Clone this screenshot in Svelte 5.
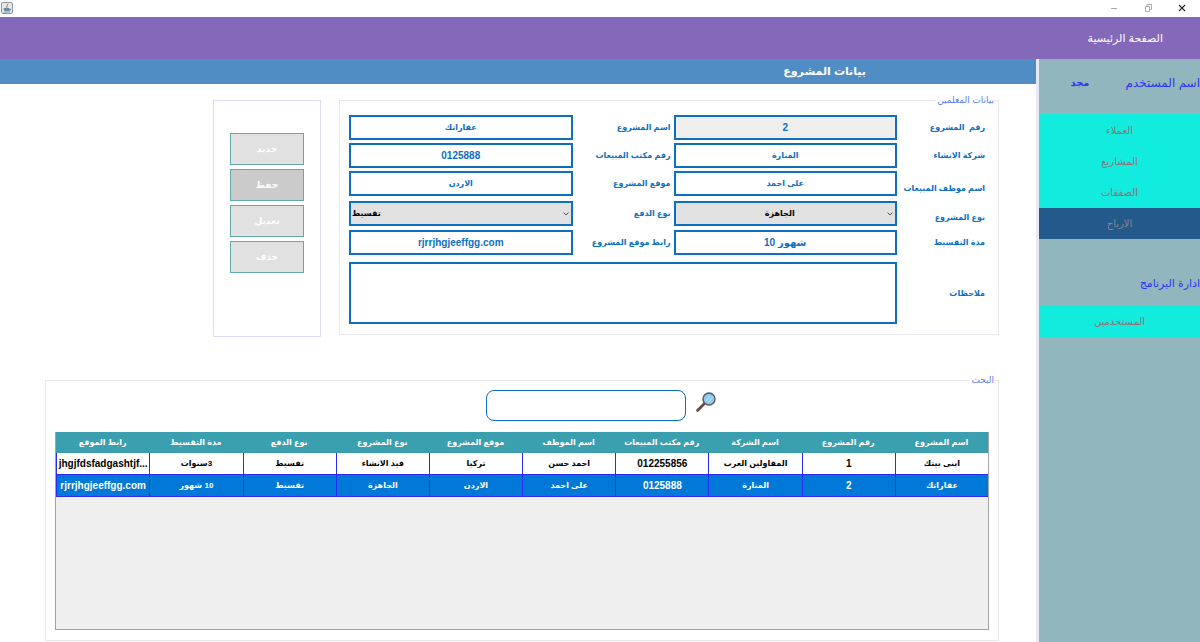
<script>
  const menu = ["العملاء", "المشاريع", "الصفقات", "الارباح"];
  let activePage = $state("الارباح");

  const columns = [
    "اسم المشروع",
    "رقم المشروع",
    "اسم الشركة",
    "رقم مكتب المبيعات",
    "اسم الموظف",
    "موقع المشروع",
    "نوع المشروع",
    "نوع الدفع",
    "مدة التقسيط",
    "رابط الموقع",
  ];

  const projects = [
    ["ابنى بيتك", "1", "المقاولين العرب", "012255856", "احمد حسن", "تركيا", "قيد الانشاء", "تقسيط", "3سنوات", "jhgjfdsfadgashtjf..."],
    ["عقاراتك", "2", "المنارة", "0125888", "على احمد", "الاردن", "الجاهزة", "تقسيط", "10 شهور", "rjrrjhgjeeffgg.com"],
  ];
  let selectedRow = $state(1);

  const actions = ["جديد", "حفظ", "تعديل", "حذف"];

  let form = $state({
    number: "2",
    name: "عقاراتك",
    company: "المنارة",
    officePhone: "0125888",
    employee: "على احمد",
    location: "الاردن",
    type: "الجاهزة",
    payment: "تقسيط",
    period: "شهور 10",
    link: "rjrrjhgjeeffgg.com",
    notes: "",
  });
  let search = $state("");

  const isLatin = (text) => /^[\w.]+$/.test(text);
</script>

{#snippet chevron()}
  <svg class="chevron" viewBox="0 0 6 4" aria-hidden="true">
    <path d="M0.5 0.5 L3 3 L5.5 0.5" fill="none" stroke="#555" />
  </svg>
{/snippet}

<div class="window">
  <div class="titlebar">
    <svg class="app-icon" viewBox="0 0 12 12" aria-hidden="true">
      <rect x="0.5" y="0.5" width="11" height="11" rx="1.5" fill="#e4ebf0" stroke="#8798a5" />
      <path d="M6.5 2 C7.5 3.5 4.5 4 6 6" fill="none" stroke="#e08a2c" stroke-width="1.3" />
      <path d="M3 6.5 H8 V8.5 H3.5 Z M2.5 10 H9" fill="#6d8da6" stroke="#5d7d96" stroke-width="0.8" />
      <path d="M8 7 H9.5 V8.2 H8" fill="none" stroke="#5d7d96" stroke-width="0.7" />
    </svg>
    <div class="window-buttons">
      <button aria-label="تصغير">
        <svg viewBox="0 0 8 8"><path d="M1 4.5 H7" stroke="#aaa" /></svg>
      </button>
      <button aria-label="استعادة">
        <svg viewBox="0 0 8 8">
          <path d="M1.5 2.5 H5.5 V7.5 H1.5 Z M3 2 V0.5 H7.5 V5.5 H6" fill="none" stroke="#999" stroke-width="0.8" />
        </svg>
      </button>
      <button aria-label="اغلاق">
        <svg viewBox="0 0 8 8"><path d="M1 1 L7 7 M7 1 L1 7" stroke="#222" stroke-width="1.1" /></svg>
      </button>
    </div>
  </div>

  <header><h1>الصفحة الرئيسية</h1></header>

  <div class="body">
    <aside>
      <div class="user">
        <span>اسم المستخدم</span>
        <strong>مجد</strong>
      </div>
      <nav>
        {#each menu as page}
          <button class:active={page === activePage} onclick={() => (activePage = page)}>{page}</button>
        {/each}
      </nav>
      <h2>ادارة البرنامج</h2>
      <nav>
        <button>المستخدمين</button>
      </nav>
    </aside>

    <main>
      <h2 class="page-title">بيانات المشروع</h2>

      <div class="top">
        <fieldset class="details">
          <legend>بيانات المعلمين</legend>
          <div class="fields">
            <label for="number">رقم&nbsp; المشروع</label>
            <input id="number" class="latin" readonly bind:value={form.number} />
            <label for="name">اسم المشروع</label>
            <input id="name" bind:value={form.name} />

            <label for="company">شركة الانشاء</label>
            <input id="company" bind:value={form.company} />
            <label for="phone">رقم مكتب المبيعات</label>
            <input id="phone" class="latin" bind:value={form.officePhone} />

            <label for="employee" class="low">اسم موظف المبيعات</label>
            <input id="employee" bind:value={form.employee} />
            <label for="location">موقع المشروع</label>
            <input id="location" bind:value={form.location} />

            <label for="type" class="low">نوع المشروع</label>
            <div class="select center">
              <select id="type" bind:value={form.type}>
                <option>الجاهزة</option>
                <option>قيد الانشاء</option>
              </select>
              {@render chevron()}
            </div>
            <label for="payment">نوع الدفع</label>
            <div class="select">
              <select id="payment" bind:value={form.payment}>
                <option>تقسيط</option>
                <option>كاش</option>
              </select>
              {@render chevron()}
            </div>

            <label for="period">مدة التقسيط</label>
            <input id="period" class="latin" bind:value={form.period} />
            <label for="link">رابط موقع المشروع</label>
            <input id="link" class="latin" bind:value={form.link} />

            <label for="notes" class="middle">ملاحظات</label>
            <textarea id="notes" bind:value={form.notes}></textarea>
          </div>
        </fieldset>

        <div class="actions">
          {#each actions as action}
            <button class:hover={action === "حفظ"}>{action}</button>
          {/each}
        </div>
      </div>

      <fieldset class="results">
        <legend>البحث</legend>
        <div class="search">
          <label for="search" aria-label="البحث">
            <svg viewBox="0 0 20 20" aria-hidden="true">
              <path d="M1.5 18.5 L8 12" stroke="#5b4a45" stroke-width="2.6" stroke-linecap="round" />
              <circle cx="13" cy="7" r="6" fill="#8ecbf2" stroke="#5d5555" stroke-width="1.4" />
              <path d="M10 9 L14 4 M13 10 L16.5 5.5" stroke="#c4e6fb" />
            </svg>
          </label>
          <input id="search" bind:value={search} />
        </div>

        <div class="table-box">
          <table>
            <thead>
              <tr>
                {#each columns as column}
                  <th>{column}</th>
                {/each}
              </tr>
            </thead>
            <tbody>
              {#each projects as project, i}
                <tr class:selected={i === selectedRow} onclick={() => (selectedRow = i)}>
                  {#each project as value}
                    <td class:latin={isLatin(value)}>{value}</td>
                  {/each}
                </tr>
              {/each}
            </tbody>
          </table>
        </div>
      </fieldset>
    </main>
  </div>
</div>

<style>
  :global(body) {
    margin: 0;
  }

  .window {
    min-height: 100vh;
    display: flex;
    flex-direction: column;
    background-color: white;
    font-family: "Liberation Sans", "DejaVu Sans", sans-serif;
    font-size: 9px;
    direction: rtl;
  }

  .window * {
    box-sizing: border-box;
  }

  button,
  input,
  select,
  textarea {
    font: inherit;
    margin: 0;
    border-radius: 0;
  }

  h1,
  h2 {
    margin: 0;
  }

  .titlebar {
    height: 17px;
    display: flex;
    direction: ltr;
    justify-content: space-between;
    align-items: center;
    padding: 0 14px 2px 1px;
  }

  .app-icon {
    width: 12px;
    height: 12px;
  }

  .window-buttons {
    display: flex;
    gap: 26px;
  }

  .window-buttons button {
    display: flex;
    padding: 0;
    border: none;
    background: none;
  }

  .window-buttons svg {
    width: 8px;
    height: 8px;
  }

  header {
    height: 42px;
    display: flex;
    align-items: center;
    padding: 0 37px;
    background-color: #8468ba;
    color: white;
  }

  h1 {
    font-size: 11px;
    font-weight: normal;
  }

  .body {
    flex: 1;
    display: flex;
  }

  aside {
    width: 164px;
    flex-shrink: 0;
    background-color: #92b6be;
    border-left: 3px solid #e9e9f4;
    color: #2f35f5;
    font-size: 11px;
  }

  .user {
    height: 55px;
    display: flex;
    align-items: center;
    gap: 36px;
    padding-bottom: 8px;
    font-size: 12px;
  }

  .user strong {
    font-size: 10px;
  }

  nav {
    display: flex;
    flex-direction: column;
    padding-top: 1px;
    background-color: #12ecdf;
  }

  nav button {
    height: 31px;
    border: none;
    background: none;
    color: #8a7479;
    font-size: 10px;
    cursor: pointer;
  }

  nav .active {
    background-color: #235a8b;
    color: #88878a;
  }

  aside h2 {
    font-size: 11px;
    font-weight: normal;
    line-height: 22px;
    padding: 33px 0 11px;
  }

  main {
    flex: 1;
    min-width: 0;
    display: flex;
    flex-direction: column;
  }

  .page-title {
    height: 25px;
    line-height: 25px;
    padding-right: 170px;
    background-color: #4f8dc4;
    color: white;
    font-size: 11px;
  }

  fieldset {
    min-width: 0;
    margin: 0;
    padding: 0;
    border: 1px solid #e8e8ee;
  }

  legend {
    margin-right: -10px;
    padding: 0 1px;
    line-height: 12px;
    color: #5b7df0;
  }

  .top {
    display: flex;
    align-items: flex-start;
    gap: 18px;
    padding: 11px 37px 0 213px;
  }

  .details {
    flex: 1;
    margin-top: -1px;
    padding: 9px 13px 10px 9px;
  }

  .fields {
    display: grid;
    grid-template-columns: 88px 1fr 101px 1fr;
    grid-template-rows: 25px 25px 27px 26px 29px 62px;
    row-gap: 3px;
    align-items: start;
    color: #0c6fc0;
    font-size: 8px;
    font-weight: bold;
  }

  .fields label {
    line-height: 25px;
    white-space: nowrap;
  }

  .fields label:nth-of-type(even) {
    padding-right: 3px;
  }

  .fields .low {
    align-self: end;
    line-height: 18px;
  }

  .fields .middle {
    align-self: center;
  }

  .fields input,
  .fields select,
  .fields textarea {
    width: 100%;
    height: 25px;
    padding: 0 2px;
    border: 2px solid #0c6fc0;
    background-color: white;
    color: #0c6fc0;
    text-align: center;
    outline: none;
  }

  .fields input[readonly] {
    background-color: #efefef;
  }

  .fields .latin {
    font-size: 10px;
  }

  .fields textarea {
    display: block;
    grid-column: 2 / -1;
    height: 62px;
    resize: none;
  }

  .select {
    position: relative;
    direction: ltr;
  }

  .fields select {
    display: block;
    appearance: none;
    padding: 0 12px 0 1px;
    background-color: #e1e1e1;
    color: black;
    text-align: left;
  }

  .fields .center select {
    text-align: center;
    text-align-last: center;
  }

  .chevron {
    position: absolute;
    top: 11px;
    right: 4px;
    width: 6px;
    height: 4px;
    pointer-events: none;
  }

  .actions {
    width: 108px;
    height: 237px;
    margin-top: 5px;
    display: flex;
    flex-direction: column;
    gap: 4px;
    padding: 32px 16px;
    border: 1px solid #dcdcfa;
  }

  .actions button {
    height: 32px;
    border: 1px solid #62a9ae;
    background-color: #e1e1e1;
    color: white;
    font-weight: bold;
    cursor: pointer;
  }

  .actions .hover {
    background-color: #cbcbcb;
  }

  .results {
    flex: 1;
    display: flex;
    flex-direction: column;
    margin: 37px 37px 2px 45px;
    padding: 4px 9px 10px;
  }

  .results legend {
    margin-right: -6px;
  }

  .search {
    display: flex;
    direction: ltr;
    flex-direction: row-reverse;
    justify-content: flex-end;
    gap: 10px;
    padding-left: 431px;
    margin-bottom: 11px;
  }

  .search input {
    width: 200px;
    height: 31px;
    border: 1px solid #0c6fc0;
    border-radius: 8px;
    background-color: white;
    outline: none;
  }

  .search svg {
    display: block;
    width: 20px;
    height: 20px;
    margin-top: 2px;
  }

  .table-box {
    height: 198px;
    border: 1px solid #a0a4a8;
    border-top: none;
    background-color: #efefef;
  }

  table {
    width: 100%;
    table-layout: fixed;
    border-collapse: separate;
    border-spacing: 0;
    font-size: 8px;
    font-weight: bold;
    text-align: center;
  }

  th {
    height: 21px;
    padding: 0;
    background-color: #3a9fae;
    color: white;
  }

  td {
    height: 22px;
    padding: 0;
    border: solid #2a2af5;
    border-width: 0 0 1px 1px;
    background-color: white;
    color: black;
    white-space: nowrap;
    overflow: hidden;
  }

  td.latin {
    direction: ltr;
    font-size: 10px;
  }

  .selected td {
    background-color: #0078d7;
    color: white;
  }
</style>
